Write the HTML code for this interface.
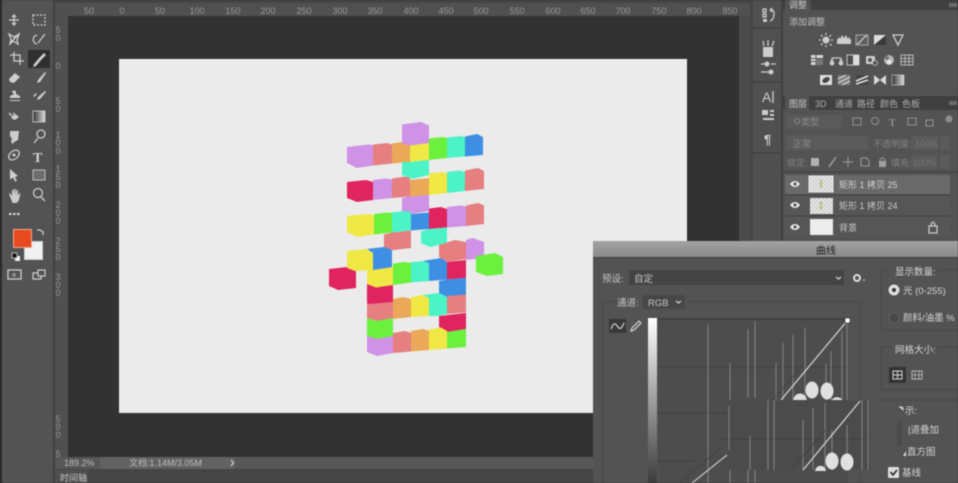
<!DOCTYPE html>
<html lang="zh"><head><meta charset="utf-8"><title>曲线</title>
<style>
html,body{margin:0;padding:0;background:#323232;width:958px;height:483px;overflow:hidden}
svg{display:block;filter:blur(.6px)}
text{font-family:"Liberation Sans","Noto Sans CJK SC",sans-serif;fill:#c6c6c6;font-size:9px}
.r{font-size:9px;fill:#979797;text-anchor:middle}
.v{font-size:9px;fill:#979797;text-anchor:middle}
.t{fill:none;stroke:#cdcdcd;stroke-width:1.3}
.f{fill:#cdcdcd}
.h{stroke:#7d7d7d;stroke-width:1.2;fill:none}
.g{stroke:#3c3c3c;stroke-width:.8}
</style></head><body>
<svg width="958" height="483" viewBox="0 0 958 483" xmlns="http://www.w3.org/2000/svg">
<!-- base -->
<rect width="958" height="483" fill="#4f4f4f"/>
<rect x="0" y="0" width="2" height="483" fill="#2a2a2a"/>
<rect x="2" y="0" width="51" height="483" fill="#535353"/>
<rect x="53" y="0" width="2" height="483" fill="#404040"/>
<!-- rulers -->
<rect x="55" y="0" width="695" height="16" fill="#505050"/>
<rect x="55" y="0" width="13" height="457" fill="#505050"/>
<rect x="55" y="0" width="695" height="3" fill="#454545"/>
<g>
<text class="r" x="89" y="14">50</text><text class="r" x="122" y="14">0</text><text class="r" x="160" y="14">50</text><text class="r" x="197" y="14">100</text><text class="r" x="233" y="14">150</text><text class="r" x="268" y="14">200</text><text class="r" x="304" y="14">250</text><text class="r" x="340" y="14">300</text><text class="r" x="375" y="14">350</text><text class="r" x="411" y="14">400</text><text class="r" x="446" y="14">450</text><text class="r" x="481" y="14">500</text><text class="r" x="517" y="14">550</text><text class="r" x="553" y="14">600</text><text class="r" x="588" y="14">650</text><text class="r" x="623" y="14">700</text><text class="r" x="659" y="14">750</text><text class="r" x="694" y="14">800</text><text class="r" x="730" y="14">850</text>
</g>
<g>
<text class="v" x="58" y="33">5</text><text class="v" x="58" y="41">0</text>
<text class="v" x="58" y="69">0</text>
<text class="v" x="58" y="104">5</text><text class="v" x="58" y="112">0</text>
<text class="v" x="58" y="138">1</text><text class="v" x="58" y="146">0</text><text class="v" x="58" y="154">0</text>
<text class="v" x="58" y="172">1</text><text class="v" x="58" y="180">5</text><text class="v" x="58" y="188">0</text>
<text class="v" x="58" y="208">2</text><text class="v" x="58" y="216">0</text><text class="v" x="58" y="224">0</text>
<text class="v" x="58" y="244">2</text><text class="v" x="58" y="252">5</text><text class="v" x="58" y="260">0</text>
<text class="v" x="58" y="280">3</text><text class="v" x="58" y="288">0</text><text class="v" x="58" y="296">0</text>
<text class="v" x="58" y="422">5</text><text class="v" x="58" y="430">0</text><text class="v" x="58" y="438">0</text>
<text class="v" x="58" y="457">5</text>
</g>
<!-- workspace -->
<rect x="68" y="16" width="671" height="441" fill="#323232"/>
<rect x="739" y="16" width="11" height="441" fill="#4b4b4b"/>
<rect x="119" y="59" width="568" height="354" fill="#ebebeb"/>
<rect x="119" y="59" width="568" height="1" fill="#f5f5f5"/>
<!-- status bar -->
<rect x="55" y="457" width="695" height="12" fill="#575757"/>
<rect x="100" y="457" width="135" height="12" fill="#626262"/>
<rect x="55" y="469" width="903" height="14" fill="#454545"/>
<rect x="55" y="470" width="33" height="13" fill="#505050"/>
<text x="64" y="466" style="font-size:9px;fill:#bcbcbc">189.2%</text>
<text x="129" y="466" style="font-size:9px;fill:#bcbcbc">文档:1.14M/3.05M</text>
<path d="M231 460l2.500 3-2.500 3" class="t" stroke-width="1"/>
<text x="60" y="481" style="font-size:9px;fill:#c6c6c6">时间轴</text>

<!-- cubes -->
<g>
<!-- row 1 -->
<polygon fill="#cf92e6" points="347,147 368,144.500 373,145 373,165.500 357,168 347,163"/>
<polygon fill="#e57f80" points="373,144.500 387,143 392,144.500 392,163.500 373,165.500"/>
<polygon fill="#eba858" points="392,143.500 405,141.500 410,143 410,162 392,163.500"/>
<polygon fill="#efe845" points="410,145 429,143 429,160 410,162"/>
<polygon fill="#6cf03e" points="429,138.500 442,137 447,138 447,158 429,160"/>
<polygon fill="#4cf3c6" points="447,137.500 460,136 465,137 465,156.500 447,158"/>
<polygon fill="#3e8fe4" points="465,136.500 477,134 483,137 483,155 465,156.500"/>
<polygon fill="#cf92e6" points="402,124.500 421,122 429,125.500 429,143 410,145.500 402,143.500"/>
<polygon fill="#4cf3c6" points="402,162 410,162 429,160 429,175 412,179 402,175"/>
<!-- row 2 -->
<polygon fill="#e0245f" points="347,182 366,180 373,182 373,200 357,202 347,198"/>
<polygon fill="#cf92e6" points="373,180 386,178.500 392,179.500 392,198 373,200"/>
<polygon fill="#e57f80" points="392,178.500 405,176.500 410,178 410,196.500 392,198"/>
<polygon fill="#eba858" points="410,180 429,178 429,195 410,196.500"/>
<polygon fill="#efe845" points="429,173.500 441,172 447,173 447,193 429,195"/>
<polygon fill="#4cf3c6" points="447,172 460,170.500 465,172 465,191 447,193"/>
<polygon fill="#e57f80" points="465,170.500 478,168 484,171 484,189 465,191"/>
<polygon fill="#cf92e6" points="402,198 410,196.500 429,195 429,211 410,214 402,212"/>
<!-- row 3 -->
<polygon fill="#efe845" points="347,216 368,214 374,215 374,234.500 357,237 347,232"/>
<polygon fill="#6cf03e" points="374,214 387,212.500 392,213 392,232.500 374,234.500"/>
<polygon fill="#4cf3c6" points="392,212.500 405,211 411,212 411,230.500 392,232.500"/>
<polygon fill="#3e8fe4" points="411,214 429,212.500 429,229 411,230.500"/>
<polygon fill="#e0245f" points="429,208.500 441,207 447,209 447,227.500 429,229"/>
<polygon fill="#cf92e6" points="447,207 460,205.500 466,206.500 466,226 447,227.500"/>
<polygon fill="#e57f80" points="466,205.500 478,203 484,205.500 484,224 466,226"/>
<polygon fill="#e57f80" points="384,234.500 392,232.500 411,230.500 411,248 386,251 384,250"/>
<polygon fill="#4cf3c6" points="421,231.500 429,229 447,227.500 447,243 430,247 421,243"/>
<!-- upper right -->
<polygon fill="#cf92e6" points="466,240 473,238 484,242 484,258 466,260"/>
<polygon fill="#e57f80" points="439,245 455,240 466,242 466,259 447,262 439,257"/>
<polygon fill="#6cf03e" points="476,256 495,253 503,257 503,274 487,276 476,272"/>
<polygon fill="#e0245f" points="329,269 347,267 356,271 356,288 338,290 329,286"/>
<!-- T stem top -->
<polygon fill="#efe845" points="347,251 366,249 373,253 373,270 355,271 347,268"/>
<polygon fill="#3e8fe4" points="367,249 384,247 392,250 392,268 373,270 373,253"/>
<polygon fill="#e57f80" points="367,302 393,300 393,318 377,321 367,318"/>
<polygon fill="#efe845" points="367,270 373,270 393,267 393,285 376,287.500 367,284"/>
<polygon fill="#e0245f" points="367,284 376,287.500 393,285 393,302 369,304 367,303"/>
<polygon fill="#6cf03e" points="367,318 377,321 393,318 393,337 377,339 367,336"/>
<polygon fill="#cf92e6" points="367,336 377,339 393,336 393,353 377,356 367,352"/>
<!-- mid row -->
<polygon fill="#6cf03e" points="393,263.500 405,262 411,263 411,282.500 393,285"/>
<polygon fill="#4cf3c6" points="411,262 425,261 429,263 429,281 411,282.500"/>
<polygon fill="#e0245f" points="447,262 466,260 466,278 447,279.500"/>
<polygon fill="#3e8fe4" points="429,263 423,261 441,258 447,262 447,279.500 429,281"/>
<polygon fill="#3e8fe4" points="439,281 447,279.500 466,278 466,295 447,297 439,293"/>
<!-- lower row -->
<polygon fill="#eba858" points="393,299 403,297 411,299 411,317 393,319"/>
<polygon fill="#efe845" points="411,297 423,295 429,298 429,316 411,317"/>
<polygon fill="#e57f80" points="447,296 466,294.500 466,312.500 447,314"/>
<polygon fill="#4cf3c6" points="429,298 423,295 439,293 447,297 447,314 439,316 429,316"/>
<polygon fill="#e0245f" points="439,316 466,313 466,329 448,332 439,327"/>
<!-- bottom row -->
<polygon fill="#e57f80" points="393,333 405,331 411,333 411,351.500 393,353"/>
<polygon fill="#eba858" points="411,331 423,329 429,331 429,350 411,351.500"/>
<polygon fill="#efe845" points="429,329.500 441,327.500 447,331 447,348.500 429,350"/>
<polygon fill="#6cf03e" points="447,332 466,329 466,347 447,348.500"/>
</g>

<!-- toolbar -->
<g>
<rect x="28" y="50" width="22" height="18" fill="#2f2f2f"/>
<path class="t" d="M14 15v10M9 20h10M12 17l2-2 2 2M12 23l2 2 2-2"/>
<rect x="33" y="15" width="12" height="10" class="t" stroke-dasharray="2 1.500"/>
<path class="t" d="M9 34l5 3 5-3-2 6 1 4-5-3-3 3 1-5zM10 43l8-8"/>
<path class="t" d="M37 35c-5 1-5 8 0 9M38 43l7-9"/>
<path class="t" d="M10 55h10v10M14 52v9h10"/>
<path class="f" d="M44 53l2 2-3 3-1 1-6 7-3 1 1-3 6-7 1-1z"/>
<path class="f" d="M9 79l6-6 5 4-6 6-4-1z"/>
<path class="f" d="M45 72l1 1-6 9-3 1 1-3z"/>
<path class="f" d="M12 92c0-2 4-2 4 0v2l4 2v2H10v-2l4-2zM10 100h10v1H10z"/>
<path class="f" d="M45 91l1 1-6 7-3 1 1-3zM33 96l3-3 1 1-3 3z"/>
<path class="t" d="M9 113l5 5M13 113l5 4"/><path class="f" d="M15 114l4 3-4 3-4-2z"/>
<rect x="33" y="111" width="12" height="11" fill="url(#gr)" stroke="#d4d4d4" stroke-width=".8"/>
<path class="f" d="M10 131h9l-1 9-4 2-1 2-2-2 1-3-2-3z"/>
<circle class="t" cx="41" cy="134" r="4"/><path class="t" d="M38 138l-4 5" stroke-width="2"/>
<ellipse class="t" cx="14" cy="155" rx="6" ry="4" transform="rotate(-40 14 155)"/><circle class="f" cx="14" cy="155" r="1.500"/>
<text x="33" y="162" style="font:bold 14px 'Liberation Serif',serif;fill:#d6d6d6">T</text>
<path class="f" d="M10 169l8 7-3 1 2 4-2 .5-2-4-3 2z"/>
<rect x="33" y="170" width="12" height="10" fill="#6d6d6d" stroke="#bdbdbd" stroke-width="1"/>
<path class="f" d="M9 194l1-1 2 3v-6h1.500v5l.5-6h1.500v6l1-5h1.500v6l1.500-3 1 1-2 7-2 2h-4z"/>
<circle class="t" cx="38" cy="193" r="4.500"/><path class="t" d="M41 197l4 4" stroke-width="2"/>
<path d="M9 214h2.500M13 214h2.500M17 214h2.500" stroke="#d8d8d8" stroke-width="2"/>
<rect x="24.500" y="241.500" width="18" height="18" fill="#f1f1f1" stroke="#cfcfcf"/>
<rect x="13.500" y="229.500" width="18" height="18" fill="#e84a1f" stroke="#eea98f"/>
<path class="t" d="M37 230h3l3 2v3" stroke-width="1.200"/>
<rect x="15" y="256" width="5" height="5" fill="#eee"/><rect x="12" y="253" width="5" height="5" fill="#111" stroke="#eee" stroke-width=".7"/>
<rect x="8" y="270" width="13" height="9" class="t"/><circle cx="14" cy="275" r="2.200" fill="#8a8a8a"/>
<rect x="33" y="273" width="8" height="6" class="t"/><rect x="38" y="270" width="7" height="6" fill="#535353" stroke="#d4d4d4" stroke-width="1.100"/>
</g>
<defs>
<linearGradient id="gr" x1="0" x2="1" y1="0" y2="0"><stop offset="0" stop-color="#333"/><stop offset="1" stop-color="#ddd"/></linearGradient>
<linearGradient id="bar" x1="0" x2="0" y1="0" y2="1"><stop offset="0" stop-color="#fff"/><stop offset="1" stop-color="#3c3c3c"/></linearGradient>
<linearGradient id="ttl" x1="0" x2="0" y1="0" y2="1"><stop offset="0" stop-color="#a2a2a2"/><stop offset="1" stop-color="#8a8a8a"/></linearGradient>
<pattern id="chk" width="4" height="4" patternUnits="userSpaceOnUse"><rect width="4" height="4" fill="#e6e6e6"/><rect width="2" height="2" fill="#cfcfcf"/><rect x="2" y="2" width="2" height="2" fill="#cfcfcf"/></pattern>
</defs>

<!-- right strip -->
<rect x="750" y="0" width="3" height="483" fill="#454545"/>
<rect x="753" y="0" width="28" height="483" fill="#505050"/>
<rect x="781" y="0" width="177" height="483" fill="#535353"/>
<rect x="781" y="0" width="2" height="483" fill="#404040"/>
<path d="M753 28h28M753 82h28M753 153h28" stroke="#3c3c3c" stroke-width="1"/>
<g>
<rect x="763" y="9" width="3" height="3" class="t" stroke-width="1"/><rect x="763" y="14" width="3" height="3" class="t" stroke-width="1"/><rect x="763" y="19" width="4" height="3" class="f"/>
<path class="t" d="M770 10c3-1 4 1 4 4s-1 6-4 7M770 10l2-2M770 10l2 2"/>
<path class="f" d="M763 47h10v10h-10z"/><path class="t" d="M764 46l-1-5M768 46v-6M772 46l2-5"/>
<path class="t" d="M761 64h5M771 64h5"/><circle class="f" cx="767" cy="64" r="2.500"/>
<path class="t" d="M761 72h8"/><circle class="f" cx="771" cy="72" r="2.500"/>
<text x="762" y="102" style="font-size:14px;fill:#cdcdcd">A</text><path d="M773 91v12" stroke="#cdcdcd" stroke-width="1.300"/>
<rect x="762" y="110" width="6" height="5" class="f"/><rect x="770" y="110" width="4" height="2" class="f"/><rect x="770" y="114" width="4" height="2" class="f"/><rect x="763" y="118" width="11" height="2" class="f"/>
<text x="764" y="144" style="font:bold 13px 'Liberation Sans',sans-serif;fill:#d6d6d6">¶</text>
</g>

<!-- adjustments panel -->
<rect x="783" y="0" width="175" height="10" fill="#404040"/>
<rect x="785" y="0" width="26" height="10" fill="#535353"/>
<text x="789" y="8" style="font-size:9px">调整</text>
<text x="789" y="25" style="font-size:9px;fill:#c0c0c0">添加调整</text>
<rect x="949" y="3" width="8" height="4" fill="#6a6a6a"/>
<g>
<circle cx="826" cy="40" r="3.500" class="f"/><path class="t" d="M826 33v2M826 45v2M819 40h2M831 40h2M821 35l1.500 1.500M830 44l1.500 1.500M831 35l-1.500 1.500M821 45l1.500-1.500" stroke-width="1"/>
<path class="f" d="M837 44v-4l2-3 1 2 2-4 2 3 2-3 2 4 1-2 2 3v4z"/>
<rect x="856" y="35" width="12" height="10" fill="#5f5f5f" stroke="#bcbcbc" stroke-width=".8"/><path class="t" d="M857 44c4-1 5-7 10-8" stroke-width="1"/>
<rect x="874" y="35" width="12" height="10" fill="#ddd"/><path d="M874 45l12-10v10z" fill="#3a3a3a"/>
<path class="t" d="M893 35h10l-5 10z" stroke-width="1.400"/>

<rect x="811" y="55" width="12" height="10" fill="#d8d8d8"/><path d="M811 58.500h12M811 61.500h12M816 55v10" stroke="#555" stroke-width=".9"/><rect x="816" y="59" width="7" height="6" fill="#777"/>
<path class="t" d="M830 64l2-5 2 5M839 64l2-5 2 5M832 58h9" stroke-width="1"/><circle class="f" cx="832" cy="63.500" r="2"/><circle class="f" cx="841" cy="63.500" r="2"/>
<rect x="847" y="55" width="12" height="10" fill="#4d4d4d" stroke="#ddd" stroke-width=".8"/><rect x="853" y="55" width="6" height="10" fill="#ddd"/>
<rect x="866" y="56" width="9" height="8" class="f" rx="1"/><circle cx="870" cy="60" r="2" fill="#555"/><circle cx="875" cy="63" r="2.500" fill="#535353" stroke="#ccc" stroke-width=".8"/>
<circle cx="889" cy="60" r="5" fill="#b4b4b4"/><circle cx="889" cy="62" r="2.500" fill="#e5e5e5"/><circle cx="887" cy="58" r="2" fill="#777"/>
<rect x="901" y="55" width="12" height="10" fill="#555" stroke="#d0d0d0" stroke-width=".8"/><path d="M905 55v10M909 55v10M901 58.500h12M901 61.500h12" stroke="#d0d0d0" stroke-width=".7"/>

<rect x="820" y="75" width="12" height="10" fill="#dedede"/><ellipse cx="826" cy="80" rx="4" ry="2.500" fill="#444" transform="rotate(-30 826 80)"/>
<rect x="838" y="75" width="12" height="10" fill="#7f7f7f"/><path d="M838 83l12-6M838 79l8-4M842 85l8-4" stroke="#ddd" stroke-width="1"/>
<rect x="856" y="75" width="12" height="10" fill="#444"/><path d="M856 81l12-5M856 84l12-4" stroke="#e5e5e5" stroke-width="1.500"/>
<rect x="874" y="75" width="12" height="10" fill="#d8d8d8"/><path d="M874 75l6 5 6-5zM874 85l6-5 6 5z" fill="#555"/>
<rect x="892" y="75" width="12" height="10" fill="url(#gr)" stroke="#cfcfcf" stroke-width=".6"/>
</g>

<!-- layers panel -->
<rect x="783" y="96" width="175" height="14" fill="#404040"/>
<rect x="785" y="96" width="24" height="14" fill="#535353"/>
<g>
<text x="789" y="107">图层</text>
<text x="815" y="107" style="fill:#aeaeae">3D</text><text x="835" y="107" style="fill:#aeaeae">通道</text><text x="857" y="107" style="fill:#aeaeae">路径</text><text x="880" y="107" style="fill:#aeaeae">颜色</text><text x="902" y="107" style="fill:#aeaeae">色板</text>
</g>
<rect x="949" y="101" width="8" height="4" fill="#6a6a6a"/>
<rect x="786" y="115" width="56" height="14" fill="#5a5a5a"/>
<circle cx="797" cy="121" r="2.500" fill="none" stroke="#8d8d8d"/><text x="801" y="125" style="font-size:9px;fill:#8d8d8d">类型</text>
<g stroke="#929292" fill="none" stroke-width="1">
<rect x="853" y="118" width="8" height="7"/><circle cx="875" cy="121" r="3.500"/><rect x="908" y="118" width="8" height="7"/><rect x="926" y="120" width="7" height="6"/>
</g>
<text x="889" y="126" style="font:bold 10px 'Liberation Serif',serif;fill:#929292">T</text>
<circle cx="949" cy="119" r="3.500" fill="#8d8d8d"/>
<rect x="786" y="136" width="82" height="14" fill="#5b5b5b"/>
<text x="793" y="147" style="font-size:9px;fill:#8d8d8d">正常</text>
<text x="873" y="147" style="font-size:9px;fill:#858585">不透明度:</text>
<rect x="912" y="136" width="26" height="14" fill="#5b5b5b"/><text x="915" y="147" style="font-size:9px;fill:#757575">100%</text>
<rect x="940" y="136" width="10" height="14" fill="#5b5b5b"/>
<text x="787" y="166" style="font-size:9px;fill:#858585">锁定:</text>
<g>
<rect x="811" y="158" width="8" height="8" fill="url(#chk)" opacity=".7"/>
<path d="M829 167l7-10" stroke="#a0a0a0" stroke-width="1.500"/>
<path d="M848 157v10M843 162h10" stroke="#a0a0a0"/>
<path d="M861 158h6l2 3v5h-8z" fill="none" stroke="#a0a0a0"/>
<rect x="879" y="161" width="7" height="6" fill="#a0a0a0"/><path d="M880 161c0-4 5-4 5 0" fill="none" stroke="#a0a0a0"/>
</g>
<text x="891" y="166" style="font-size:9px;fill:#858585">填充:</text>
<rect x="911" y="155" width="26" height="14" fill="#5b5b5b"/><text x="913" y="166" style="font-size:9px;fill:#757575">100%</text>
<rect x="940" y="155" width="10" height="14" fill="#5b5b5b"/>
<path d="M783 172h175" stroke="#3f3f3f"/>
<!-- layer rows -->
<rect x="785" y="175" width="165" height="19" fill="#696969"/>
<rect x="785" y="196" width="165" height="19" fill="#565656"/>
<rect x="785" y="217" width="165" height="20" fill="#565656"/>
<path d="M785 195h165M785 216h165" stroke="#424242"/>
<g fill="#e8e8e8">
<path d="M790 184c3-4 7-4 10 0-3 4-7 4-10 0z"/><circle cx="795" cy="184" r="1.500" fill="#444"/>
<path d="M790 205c3-4 7-4 10 0-3 4-7 4-10 0z"/><circle cx="795" cy="205" r="1.500" fill="#444"/>
<path d="M790 227c3-4 7-4 10 0-3 4-7 4-10 0z"/><circle cx="795" cy="227" r="1.500" fill="#444"/>
</g>
<rect x="809" y="176" width="24" height="16" fill="url(#chk)" stroke="#e8e8e8" stroke-width="1"/>
<rect x="810" y="198" width="23" height="16" fill="url(#chk)"/>
<path d="M821 180v8" stroke="#a9b35b" stroke-width="2.500" stroke-dasharray="1.500 1"/>
<path d="M821 202v8" stroke="#a9b35b" stroke-width="2.500" stroke-dasharray="1.500 1"/>
<rect x="810" y="219" width="23" height="16" fill="#ececec"/>
<text x="839" y="188" style="font-size:9px;fill:#d4d4d4">矩形 1 拷贝 25</text>
<text x="839" y="209" style="font-size:9px;fill:#c8c8c8">矩形 1 拷贝 24</text>
<text x="839" y="231" style="font-size:9px;fill:#c8c8c8">背景</text>
<rect x="929" y="226" width="8" height="7" fill="none" stroke="#d0d0d0" stroke-width="1.200"/><path d="M931 226c0-5 4-5 4 0" fill="none" stroke="#d0d0d0" stroke-width="1.200"/>

<!-- curves dialog -->
<rect x="593" y="241" width="365" height="242" fill="#535353"/>
<rect x="593" y="241" width="365" height="16" fill="url(#ttl)"/>
<rect x="593" y="257" width="365" height="1" fill="#3d3d3d"/>
<text x="816" y="254" style="font-size:10px;fill:#1e1e1e">曲线</text>
<text x="602" y="282" style="font-size:9.500px">预设:</text>
<rect x="629" y="270" width="215" height="15" fill="#444"/>
<text x="634" y="282" style="font-size:9.500px">自定</text>
<path d="M836 277l2.500 2 2.500-2" class="t" stroke-width="1"/>
<circle cx="857" cy="278" r="3" fill="none" stroke="#ddd" stroke-width="2"/><circle cx="864" cy="280" r=".8" fill="#ddd"/>
<path d="M603 483V302h14M688 302h172v181" fill="none" stroke="#484848"/>
<text x="617" y="306" style="font-size:9.500px">通道:</text>
<rect x="643" y="295" width="42" height="14" fill="#474747"/>
<text x="648" y="306" style="font-size:9.500px">RGB</text>
<path d="M676 301l2.500 2 2.500-2" class="t" stroke-width="1"/>
<rect x="609" y="319" width="17" height="14" fill="#393939"/>
<path class="t" d="M611 329c3-8 5-5 7-2s4 1 6-4" stroke-width="1"/>
<path class="t" d="M631 331l1-3 7-7 2 2-7 7z" stroke-width="1"/>
<!-- graph -->
<rect x="648" y="318" width="9" height="165" fill="url(#bar)"/>
<rect x="658" y="318" width="190" height="165" fill="#4d4d4d"/>
<rect x="658" y="318" width="190" height="2" fill="#3f3f3f"/>
<path class="g" d="M658 367h190M658 413h72M658 461h36"/>
<path class="h" d="M708 324V483M748 329V398M755 321V398M776 363V400M783 343V400M793 335V400M805 328V400M826 364V400M831 351V400M842 331V400M847 321V400M730 363V400"/>
<path class="h" d="M730 463V483M748 465V483M755 465V483"/>
<path d="M781 400L847 321" stroke="#d8d8d8" stroke-width="1.200"/>
<path d="M773 400L800 368" stroke="#3e3e3e" stroke-width="1" stroke-dasharray="2 1"/>
<rect x="845" y="318" width="5" height="5" fill="#fff" stroke="#333" stroke-width=".7"/>
<ellipse cx="812" cy="390" rx="6.500" ry="8.500" fill="#e0e0e0"/>
<ellipse cx="827" cy="391" rx="6.500" ry="8.500" fill="#e0e0e0"/>
<path d="M793 401c1-10 13-10 14 0z" fill="#dedede"/>
<path d="M831 401c2-5 10-5 12 0z" fill="#dedede"/>
<!-- glitch block -->
<rect x="728" y="400" width="142" height="70" fill="#4b4b4b"/>
<path class="g" d="M720 439H868"/>
<path class="h" d="M729 406V450M750 436V470M768 400V470M774 400V470M803 420V470M813 408V470M825 403V470M832 430V470M847 425V470M862 400V470M868 400V470"/>
<path d="M803 470L860 401" stroke="#d8d8d8" stroke-width="1.200"/>
<path d="M791 470L825 430" stroke="#3e3e3e" stroke-width="1" stroke-dasharray="2 1"/>
<ellipse cx="832" cy="461" rx="6.500" ry="8.500" fill="#e0e0e0"/>
<ellipse cx="847" cy="462" rx="6.500" ry="8.500" fill="#e0e0e0"/>
<path d="M815 471c1-7 10-7 11 0z" fill="#dedede"/>
<path d="M692 483L727 455" stroke="#d8d8d8" stroke-width="1.100"/>
<path d="M680 483L720 448" stroke="#3e3e3e" stroke-width="1" stroke-dasharray="2 1"/>
<rect x="870" y="400" width="10" height="83" fill="#535353"/>
<!-- right options -->
<path d="M881 270h8M938 270h20M881 270v60M881 330h77" fill="none" stroke="#484848"/>
<text x="895" y="275" style="font-size:9.500px;fill:#d4d4d4">显示数量:</text>
<circle cx="894" cy="290" r="5.500" fill="#dedede"/><circle cx="894" cy="290" r="2" fill="#333"/>
<text x="903" y="294" style="font-size:9.500px;fill:#d4d4d4">光 (0-255)</text>
<circle cx="894" cy="318" r="5" fill="#474747" stroke="#5f5f5f"/>
<text x="903" y="321" style="font-size:9.500px;fill:#d4d4d4">颜料/油墨 %</text>
<path d="M881 347h11M938 347h20M881 347v43M881 390h77" fill="none" stroke="#484848"/>
<text x="895" y="353" style="font-size:9.500px;fill:#d4d4d4">网格大小:</text>
<rect x="889" y="367" width="17" height="16" fill="#333"/>
<rect x="893" y="371" width="9" height="8" fill="none" stroke="#d5d5d5"/><path d="M897.500 371v8M893 375h9" stroke="#d5d5d5"/>
<rect x="912" y="371" width="10" height="8" fill="none" stroke="#b5b5b5"/><path d="M915 371v8M919 371v8M912 375h10" stroke="#b5b5b5" stroke-width=".8"/>
<path d="M880 400h78" stroke="#484848"/>
<path d="M898 406l5 1 1 4z" fill="#dcdcdc"/>
<text x="905" y="414" style="font-size:9.500px;fill:#d4d4d4">示:</text>
<rect x="897" y="420" width="5" height="26" fill="#4b4b4b"/>
<text x="908" y="433" style="font-size:9.500px;fill:#d4d4d4">|道叠加</text>
<path d="M903 456l3-5v5z" fill="#dcdcdc"/>
<text x="907" y="455" style="font-size:9.500px;fill:#d4d4d4">直方图</text>
<rect x="888" y="467" width="11" height="11" rx="1" fill="#dcdcdc"/>
<path d="M890.500 472l2.500 3 4-5" fill="none" stroke="#222" stroke-width="1.500"/>
<text x="902" y="476" style="font-size:9.500px;fill:#d4d4d4">基线</text>
</svg>
</body></html>
